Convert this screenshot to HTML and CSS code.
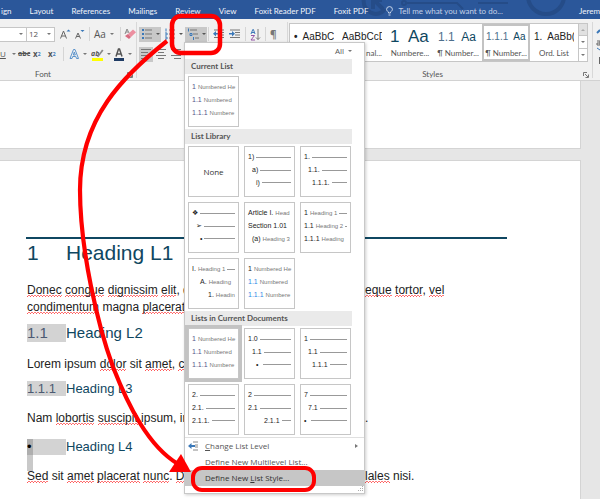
FILE: index.html
```html
<!DOCTYPE html>
<html lang="en">
<head>
<meta charset="utf-8">
<title>Document editor</title>
<link rel="stylesheet" href="styles.css">
</head>
<body>
<div class="app">
  <header class="titlebar">
    <svg class="swirl" width="240" height="19" viewBox="0 0 240 19" fill="none" stroke="#254c88" stroke-width="4" aria-hidden="true">
      <path d="M4 -2a13 13 0 0 0 12 16a13 13 0 0 0 9-5M14 0l9 9M13 9V0h9"/>
      <circle cx="44" cy="3" r="2" stroke-width="2"/><path d="M47 3h50l6 6" stroke-width="2"/>
      <circle cx="186" cy="-4" r="18"/><path d="M118 3h30" stroke-width="2"/>
    </svg>
    <nav class="tabs">
      <a href="#">ign</a><a href="#">Layout</a><a href="#">References</a><a href="#">Mailings</a><a href="#">Review</a><a href="#">View</a><a href="#">Foxit Reader PDF</a><a href="#">Foxit PDF</a>
      <a href="#" class="tell"><svg width="7" height="10" viewBox="0 0 7 10" fill="none" stroke="#c9d6ea"><path d="M2.5 7V6C1 5 .6 4.200.6 3.300a2.900 2.700 0 0 1 5.800 0C6.400 4.200 6 5 4.500 6v1zM2.500 9h2"/></svg>Tell me what you want to do...</a>
    </nav>
    <span class="user">Jerem</span>
  </header>

  <section class="ribbon">
    <div class="group font-group">
      <div class="tools font-top">
        <button class="combo" aria-label="Font name"><i class="caret"></i></button>
        <button class="combo size" aria-label="Font size">12<i class="caret"></i></button>
        <button aria-label="Grow font"><svg width="12" height="12" viewBox="0 0 12 12" fill="none" stroke="#666"><path d="M1.500 10.500L4.500 3l3 7.500M2.500 8h4"/><path d="M7.500 3.500L9.500 1.500l2 2z" fill="#3b78b8" stroke="none"/></svg></button>
        <button aria-label="Shrink font"><svg width="12" height="12" viewBox="0 0 12 12" fill="none" stroke="#666"><path d="M1.500 10.500L4 5l2.500 5.500M2.500 8.500h3"/><path d="M6.500 2h4l-2 2z" fill="#3b78b8" stroke="none"/></svg></button>
        <i class="sep"></i>
        <button class="case" aria-label="Change case">Aa<i class="caret"></i></button>
        <i class="sep"></i>
        <button aria-label="Clear formatting"><svg width="12" height="12" viewBox="0 0 12 12"><path d="M4 6l5-4.500 3 2.800L7 9z" fill="#ec8fa0"/><path d="M1 8l3-2 3 3-2 2z" fill="#d86b80"/><path d="M1 6l2-5 2 4M2 4h2" fill="none" stroke="#888"/></svg></button>
      </div>
      <div class="tools font-bottom">
        <button class="underline" aria-label="Underline"><u>U</u><i class="caret"></i></button>
        <button class="glyph"><s>abc</s></button>
        <button class="glyph">x<sub>2</sub></button>
        <button class="glyph">x<sup>2</sup></button>
        <i class="sep"></i>
        <button aria-label="Text effects"><svg width="11" height="12" viewBox="0 0 11 12" fill="none" stroke="#5b93cb"><path d="M1 10.500L4.500 1.500h1.500L9.500 10.500H7.500L6.800 8.500H3.700L3 10.500zM4.300 7h2L5.300 4z"/></svg><i class="caret"></i></button>
        <button aria-label="Highlight colour"><svg width="13" height="13" viewBox="0 0 13 13"><path d="M1 10h11v3H1z" fill="#ff0"/><text x="0" y="8" class="ink">ab</text><path d="M6 9L11 1.500l1.500 1L7.500 9z" fill="#888"/></svg><i class="caret"></i></button>
        <button aria-label="Font colour"><svg width="12" height="13" viewBox="0 0 12 13"><path d="M1 10h10v3H1z" fill="#1f3b64"/><path d="M3 8.500L5.500 1h1L9 8.500M4 6h4" fill="none" stroke="#555" stroke-width="1.500"/></svg><i class="caret"></i></button>
      </div>
      <div class="caption">Font<svg class="launch" width="6" height="6" viewBox="0 0 6 6" fill="none" stroke="#777"><path d="M.5 4V.5H4M2 2l3 3M5.500 2.500v3h-3"/></svg></div>
    </div>

    <div class="group para-group">
      <div class="tools para-top">
        <button class="on" aria-label="Bullets"><svg width="12" height="12" viewBox="0 0 12 12"><path d="M4 2h7M4 6h7M4 10h7" stroke="#777"/><path d="M1 1h2v2H1zM1 5h2v2H1zM1 9h2v2H1z" fill="#3b78b8"/></svg><i class="caret"></i></button>
        <button aria-label="Numbering"><svg width="12" height="12" viewBox="0 0 12 12"><path d="M5 2h6M5 6h6M5 10h6" stroke="#777"/><path d="M2 .5v3M1 5h2v2H1M1 9h2v2H1" stroke="#3b78b8" fill="none"/></svg><i class="caret"></i></button>
        <button class="on" aria-label="Multilevel list"><svg width="12" height="12" viewBox="0 0 12 12"><path d="M3 2h7M6 6h5M8 10h4" stroke="#777"/><path d="M1.500 .5v3M3 5.500h2v2H3zM6.500 9v3" stroke="#3b78b8" fill="none"/></svg><i class="caret"></i></button>
        <i class="sep"></i>
        <button aria-label="Decrease indent"><svg width="12" height="12" viewBox="0 0 12 12"><path d="M1 2h10M6 4.500h5M6 7h5M1 9.500h10" stroke="#777"/><path d="M0 5.800L3 3v2h3v1.600H3v2z" fill="#3b78b8"/></svg></button>
        <button aria-label="Increase indent"><svg width="12" height="12" viewBox="0 0 12 12"><path d="M1 2h10M6 4.500h5M6 7h5M1 9.500h10" stroke="#777"/><path d="M6 5.800L3 3v2H0v1.600h3v2z" fill="#3b78b8"/></svg></button>
        <i class="sep"></i>
        <button aria-label="Sort"><svg width="11" height="13" viewBox="0 0 11 13" fill="none"><path d="M1 6l1.800-4.500h.6L5 6M2 4.500h2" stroke="#3b78b8"/><path d="M1 7.500h3.500L1 12h4" stroke="#9455a8"/><path d="M8 1v10.500M6 9.500l2 2 2-2" stroke="#777"/></svg></button>
        <i class="sep"></i>
        <button class="pilcrow" aria-label="Show marks">¶</button>
      </div>
      <div class="tools para-bottom">
        <button class="on" aria-label="Align left"><svg width="10" height="10" viewBox="0 0 10 10" stroke="#777"><path d="M0 .5h10M0 3.500h7M0 6.500h10M0 9.500h7"/></svg></button>
        <button aria-label="Centre"><svg width="10" height="10" viewBox="0 0 10 10" stroke="#777"><path d="M0 .5h10M2 3.500h6M0 6.500h10M2 9.500h6"/></svg></button>
        <button aria-label="Align right"><svg width="10" height="10" viewBox="0 0 10 10" stroke="#777"><path d="M0 .5h10M3 3.500h7M0 6.500h10M3 9.500h7"/></svg></button>
      </div>
    </div>

    <div class="group styles-group">
      <div class="gallery">
        <button class="style"><span class="sample"><b>•</b>&nbsp; AaBbC</span><span class="name">&nbsp;</span></button>
        <button class="style"><span class="sample">AaBbCcD</span><span class="name under">nal...</span></button>
        <button class="style blue xl"><span class="sample">1&nbsp; Aa</span><span class="name">Numbere...</span></button>
        <button class="style blue lg"><span class="sample">1.1&nbsp;&nbsp;<em>Aa</em></span><span class="name">¶ Number...</span></button>
        <button class="style blue md picked"><span class="sample">1.1.1&nbsp; <em>Aa</em></span><span class="name">¶ Number...</span></button>
        <button class="style"><span class="sample">1.&nbsp; AaBb(</span><span class="name">Ord. List</span></button>
        <div class="scroller">
          <button class="dim" aria-label="Up"><i class="caret up"></i></button>
          <button aria-label="Down"><i class="caret"></i></button>
          <button aria-label="More"><i class="caret more"></i></button>
        </div>
      </div>
      <div class="caption">Styles<svg class="launch" width="6" height="6" viewBox="0 0 6 6" fill="none" stroke="#777"><path d="M.5 4V.5H4M2 2l3 3M5.500 2.500v3h-3"/></svg></div>
    </div>
    <div class="group edit-group">
      <svg width="8" height="40" viewBox="0 0 8 40" fill="none"><path d="M5 9l3-3" stroke="#3b78b8" stroke-width="2"/><path d="M5 17h3v4H5v-2h3" stroke="#666"/><path d="M5 24l3 2" stroke="#3b78b8"/><path d="M7.500 33v7" stroke="#666"/></svg>
    </div>
  </section>

  <main class="desk">
    <div class="page first"></div>
    <article class="page second">
      <h1><span>1</span>Heading L1</h1>
      <p><span class="lead"><q>Donec</q> <q>congue</q> <q>dignissim</q> <q>elit</q>, q</span><span><q>eque</q> <q>tortor</q>, <q>vel</q></span></p>
      <p><span class="lead"><q>condimentum</q> magna <q>placerat</q></span></p>
      <h2><span>1.1</span>Heading L2</h2>
      <p><span class="lead">Lorem ipsum <q>dolor</q> sit <q>amet</q>, <q>c</q></span></p>
      <h3><span>1.1.1</span>Heading L3</h3>
      <p><span class="lead">Nam <q>lobortis</q> <q>suscipit</q> ipsum, in</span><span>.</span></p>
      <h4><span><i>•</i></span>Heading L4</h4>
      <p><span class="lead"><q>Sed</q> sit <q>amet</q> <q>placerat</q> <q>nunc</q>. <q>D</q></span><span><q>lales</q> nisi.</span></p>
    </article>
  </main>

  <div class="menu">
    <div class="filter"><button>All<i class="caret"></i></button></div>
    <h5>Current List</h5>
    <div class="tiles">
      <button class="tile violet"><span><b>1</b>Numbered He</span><span><b>1.1</b>Numbered</span><span><b>1.1.1</b>Numbere</span></button>
    </div>
    <h5>List Library</h5>
    <div class="tiles">
      <button class="tile none">None</button>
      <button class="tile"><span><b>1)</b><hr></span><span class="in1"><b>a)</b><hr></span><span class="in2"><b>i)</b><hr></span></button>
      <button class="tile"><span><b>1.</b><hr></span><span class="in1"><b>1.1.</b><hr></span><span class="in2"><b>1.1.1.</b><hr></span></button>
      <button class="tile"><span><b class="sym">❖</b><hr></span><span class="in1"><b class="sym">➢</b><hr></span><span class="in2"><b>•</b><hr></span></button>
      <button class="tile"><span><b>Article I.</b>Head</span><span><b>Section 1.01</b></span><span class="in1"><b>(a)</b>Heading 3<hr></span></button>
      <button class="tile"><span><b>1</b>Heading 1<hr></span><span><b>1.1</b>Heading 2<hr></span><span><b>1.1.1</b>Heading</span></button>
      <button class="tile"><span><b>I.</b>Heading 1<hr></span><span class="in2"><b>A.</b>Heading</span><span class="in4"><b>1.</b>Headin</span></button>
      <button class="tile azure"><span><b>1</b>Numbered He</span><span><b>1.1</b>Numbered</span><span><b>1.1.1</b>Numbere</span></button>
    </div>
    <h5>Lists in Current Documents</h5>
    <div class="tiles">
      <button class="tile violet current"><span><b>1</b>Numbered He</span><span><b>1.1</b>Numbered</span><span><b>1.1.1</b>Numbere</span></button>
      <button class="tile"><span><b>1.0</b><hr></span><span class="in1"><b>1.1</b><hr></span><span class="in2"><b>•</b><hr class="far"></span></button>
      <button class="tile"><span><b>1</b><hr></span><span class="in1"><b>1.1</b><hr></span><span class="in2"><b>1.1.1</b><hr></span></button>
      <button class="tile"><span><b>2.</b><hr></span><span><b>2.1.</b><hr></span><span><b>2.1.1.</b><hr></span></button>
      <button class="tile"><span><b>2</b><hr></span><span><b>2.1</b><hr></span><span class="in4"><b>2.1.1</b><hr></span></button>
      <button class="tile"><span><b>7</b><hr></span><span class="in1"><b>7.1</b><hr></span><span><b>•</b><hr class="far"></span></button>
    </div>
    <div class="actions">
      <button><svg width="12" height="10" viewBox="0 0 12 10"><path d="M5 1h5M7 4h3M7 6h3M5 9h5" stroke="#888"/><path d="M0 5l3.500-3v2H7v2H3.500v2z" fill="#3b78b8"/></svg><span><u>C</u>hange List Level</span><i class="caret side"></i></button>
      <button><span><u>D</u>efine New Multilevel List...</span></button>
      <button class="hot"><span>Define New <u>L</u>ist Style...</span></button>
    </div>
    <div class="grip"><svg width="7" height="6" viewBox="0 0 7 6" fill="#aaa"><path d="M5 0h1v1H5zM3 2h1v1H3zM5 2h1v1H5zM1 4h1v1H1zM3 4h1v1H3zM5 4h1v1H5z"/></svg></div>
  </div>

  <svg class="notes" width="600" height="499" viewBox="0 0 600 499" fill="none" stroke="#f00" aria-hidden="true">
    <rect x="172" y="16" width="48" height="37" rx="9" stroke-width="4.500"/>
    <rect x="193" y="468" width="121" height="22" rx="9" stroke-width="4"/>
    <path d="M167 41C124 75 80 118 80 190C80 250 98 326 113 367C128 405 148 446 178 464" stroke-width="4.200"/>
    <path d="M181 454L191 472L169 472z" fill="#f00" stroke="none"/>
  </svg>
</div>
</body>
</html>
```
FILE: styles.css
```css
* { box-sizing: border-box; }
body { margin: 0; background: #e6e6e6; }
.app {
  position: relative;
  display: flex;
  flex-direction: column;
  min-height: 100vh;
  overflow: hidden;
  font: 8px/10px "Open Sans", "Noto Sans", sans-serif;
  color: #555;
}
button {
  margin: 0;
  padding: 0;
  border: 0;
  background: none;
  font: inherit;
  color: inherit;
  display: flex;
  align-items: center;
}
svg { flex: none; }
.caret {
  flex: none;
  width: 0;
  height: 0;
  margin-left: 4px;
  border: 2px solid transparent;
  border-top-color: #777;
  border-bottom: 0;
}

/* Title bar */
.titlebar {
  position: relative;
  display: flex;
  justify-content: space-between;
  align-items: center;
  height: 19px;
  padding-top: 3px;
  background: #2b579a;
  font-family: Lato, "Open Sans", sans-serif;
  color: #f0f4fa;
  white-space: nowrap;
}
.swirl { position: absolute; top: 0; right: 0; }
.tabs { position: relative; display: flex; gap: 18px; padding-left: 1px; }
.tabs a { color: inherit; text-decoration: none; }
.tabs .tell { display: flex; gap: 5px; color: #c3d1e8; }
.user { position: relative; }

/* Ribbon */
.ribbon {
  display: flex;
  height: 62px;
  background: #f1f1f1;
  border-bottom: 1px solid #d2d2d2;
}
.group { position: relative; display: flex; flex-direction: column; padding-top: 5px; }
.group + .group::before {
  content: "";
  position: absolute;
  left: 0;
  top: 3px;
  bottom: 2px;
  border-left: 1px solid #d8d8d8;
}
.font-group { width: 136px; }
.para-group { width: 151px; }
.styles-group { flex: 1; padding-top: 4px; }
.edit-group { width: 8px; }
.tools { display: flex; align-items: center; height: 20px; }
.sep { width: 1px; height: 14px; background: #d5d5d5; }
.combo {
  justify-content: flex-end;
  width: 27px;
  height: 15px;
  padding: 0 3px 0 2px;
  background: #fff;
  border: 1px solid #c6c6c6;
  border-left: 0;
}
.size { justify-content: space-between; width: 28px; margin-right: 4px; }
.font-top button + button:not(.combo) { margin-right: 3px; }
.case { margin: 0 6px 0 4px; font-size: 10px; }
.font-top .sep + button:last-child { margin-left: 3px; }
.underline { width: 18px; gap: 2px; }
.glyph { width: 15px; font-weight: 700; }
.glyph s { font-size: 7px; }
.glyph sub, .glyph sup { color: #3b78b8; font-size: 5px; }
.font-bottom .sep { margin-right: 5px; }
.font-bottom .sep ~ button { width: 22px; }
.font-bottom .sep ~ button .caret { margin-left: 3px; }
.ink { font: italic 700 7px "Open Sans", sans-serif; fill: #555; }
.para-top { padding-left: 3px; }
.para-top .on, .para-bottom .on { background: #c8c8c8; height: 15px; }
.para-top button:nth-child(-n+3) { width: 22px; padding-left: 2px; margin-right: 1px; }
.para-top button:nth-child(-n+3) .caret { margin-left: 3px; border-top-color: #555; }
.para-top .sep + button { margin-left: 4px; }
.para-top button:nth-child(n+5) { margin-right: 4px; }
.pilcrow { font-size: 10px; font-weight: 700; color: #777; }
.para-bottom { padding-left: 3px; gap: 1px; }
.para-bottom button { width: 14px; height: 15px; justify-content: center; }
.caption {
  display: flex;
  justify-content: center;
  position: relative;
  margin-top: auto;
  padding-bottom: 1px;
  font-family: Lato, "Open Sans", sans-serif;
  color: #555;
}
.font-group .caption { padding-right: 50px; }
.styles-group .caption { padding-right: 14px; }
.launch { position: absolute; right: 3px; bottom: 2px; }

/* Style gallery */
.gallery {
  display: grid;
  grid-template-columns: repeat(6, 48px) 1fr;
  height: 39px;
  margin: 0 4px 0 2px;
  background: #fff;
  border: 1px solid #c6c6c6;
}
.style {
  flex-direction: column;
  justify-content: space-between;
  align-items: center;
  padding: 5px 4px 3px;
  overflow: hidden;
  white-space: nowrap;
}
.sample {
  width: 100%;
  height: 16px;
  overflow: hidden;
  font: 10px/16px "Liberation Sans", Arial, sans-serif;
  color: #222;
  text-align: left;
}
.name { font-family: Lato, "Open Sans", sans-serif; }
.under { align-self: flex-end; }
.sample em { font-style: normal; color: #0f4761; }
.blue .sample { color: #4d6f8c; }
.xl .sample { font-size: 17px; color: #0f4761; }
.lg .sample { font-size: 12px; }
.md .sample { font-size: 10px; }
.style.picked { padding: 3px 2px 1px; border: 2px solid #c3c3c3; }
.scroller { display: grid; grid-template-rows: repeat(3, 1fr); border-left: 1px solid #c6c6c6; }
.scroller button { justify-content: center; border-bottom: 1px solid #c6c6c6; }
.scroller button:last-child { border-bottom: 0; }
.scroller .caret { margin: 0; }
.scroller .dim { background: #e1e1e1; }
.up { transform: rotate(180deg); opacity: .5; }
.more { box-shadow: 0 -2px 0 -1px #777; }

/* Document */
.desk { flex: 1; display: flex; flex-direction: column; gap: 13px; overflow: hidden; }
.page { margin-right: 20px; background: #fff; box-shadow: 0 0 0 1px #d4d4d4; }
.first { height: 67px; }
.second {
  flex: 1;
  padding: 76px 73px 0 27px;
  font: 12px/17px "Liberation Sans", Arial, sans-serif;
  color: #222;
}
.second p { display: grid; grid-template-columns: 338px auto; margin: 0; white-space: nowrap; }
.second q {
  quotes: none;
  background:
    repeating-linear-gradient(90deg, #f55 0 1px, transparent 1px 3px) 0 100% / 100% 1px no-repeat,
    repeating-linear-gradient(90deg, transparent 0 1px, #f77 1px 3px) 0 calc(100% - 1px) / 100% 1px no-repeat;
}
.second :is(h1, h2, h3, h4) {
  display: grid;
  grid-template-columns: 39px auto;
  font-weight: 400;
  color: #0f4761;
}
h1 { margin: 0 0 15px -1px; padding-left: 1px; border-top: 2px solid #0f4761; font-size: 21px; line-height: 28px; }
h2 { margin: 8px 0 14px; font-size: 15px; line-height: 18px; }
h3 { margin: 8px 0 14px; font-size: 13px; line-height: 15px; }
h4 { margin: 12px 0 13px; font-size: 13px; line-height: 16px; }
.second :is(h2, h3, h4) span { background: #d3d3d3; color: #4c5a72; }
.second h4 i { display: block; width: 6px; height: 32px; margin-bottom: -16px; background: rgba(120, 120, 120, .4); color: #000; font-style: normal; }

/* Drop-down list menu */
.menu {
  position: absolute;
  left: 184px;
  top: 42px;
  width: 181px;
  background: #fff;
  border: 1px solid #c8c8c8;
  box-shadow: 1px 1px 3px rgba(0, 0, 0, .2);
}
.filter { display: flex; justify-content: flex-end; align-items: center; height: 16px; padding-right: 12px; }
.menu h5 {
  margin: 0 12px 0 0;
  padding-left: 6px;
  background: #eaeaea;
  font: 700 8px/15px Lato, "Open Sans", sans-serif;
  color: #555;
}
.tiles { display: grid; grid-template-columns: repeat(3, 51px); gap: 5px; padding: 2px 3px; }
.tile {
  flex-direction: column;
  align-items: stretch;
  height: 51px;
  padding: 4px 3px 7px;
  background: #fff;
  border: 1px solid #c6c6c6;
  overflow: hidden;
  font: 6px/12px "Liberation Sans", Arial, sans-serif;
  color: #777;
}
.tile span { flex: 1; display: flex; align-items: center; gap: 2px; white-space: nowrap; }
.tile b { font-size: 7px; font-weight: 400; color: #222; }
.tile b.sym { font-family: "DejaVu Sans", sans-serif; }
.tile hr { flex: 1; height: 1px; margin: 0; border: 0; background: #999; }
.tile .far { margin-left: 3px; }
.tile .in1 { padding-left: 4px; }
.tile .in2 { padding-left: 8px; }
.tile .in4 { padding-left: 16px; }
.violet b { color: #55588a; }
.azure span + span b { color: #2e8ae6; }
.tile.none { align-items: center; justify-content: center; padding: 0; font: 8px/10px "Open Sans", sans-serif; color: #333; }
.current { box-shadow: 0 0 0 3px #c3c3c3; }
.actions { border-top: 1px solid #e0e0e0; }
.actions button { width: 100%; height: 16px; padding: 0 6px 0 20px; }
.actions svg { margin: 0 5px 0 -17px; }
.actions u { text-decoration-thickness: 1px; }
.actions .hot { background: #c6c6c6; color: #333; }
.side { margin-left: auto; border: 2px solid transparent; border-left: 3px solid #777; border-right: 0; }
.grip { display: flex; justify-content: flex-end; height: 7px; }

/* Annotation layer */
.notes { position: absolute; left: 0; top: 0; pointer-events: none; }
```
